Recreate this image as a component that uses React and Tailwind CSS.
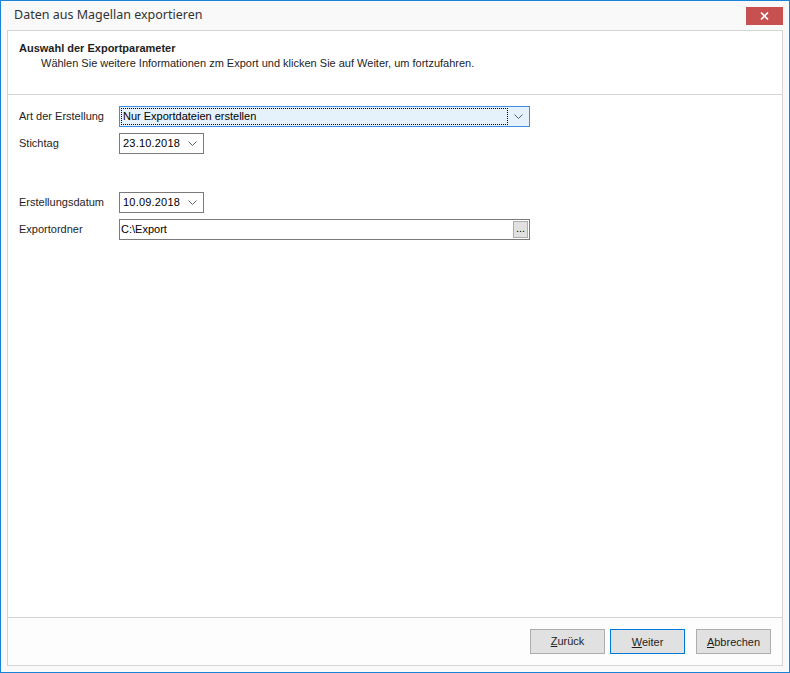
import { useState } from "react";

const uiFont = { fontFamily: '"Liberation Sans", Arial, sans-serif' };

function Chevron() {
  return (
    <svg width="9" height="6" viewBox="0 0 9 6" className="shrink-0">
      <polyline points="0.5,0.5 4.5,4.5 8.5,0.5" fill="none" stroke="#606060" strokeWidth="1" />
    </svg>
  );
}

function DateBox({ value }) {
  return (
    <div className="flex h-[21px] w-[85px] items-center justify-between border border-[#7a7a7a] bg-white pl-[3px] pr-[6px] text-[11px] text-black">
      <span className="tracking-[0.2px]">{value}</span>
      <Chevron />
    </div>
  );
}

function Row({ label, children }) {
  return (
    <div className="flex items-center">
      <div className="w-[100px] text-[11px] text-[#1e1e1e]">{label}</div>
      {children}
    </div>
  );
}

function DialogButton({ children, primary }) {
  return (
    <button
      type="button"
      className={`h-[25px] w-[75px] border bg-[#e1e1e1] text-[11px] text-[#1e1e1e] ${
        primary ? "border-[#0078d7]" : "border-[#adadad]"
      }`}
    >
      {children}
    </button>
  );
}

export default function App() {
  const [art] = useState("Nur Exportdateien erstellen");

  return (
    <div
      className="flex h-[673px] w-[790px] flex-col border border-[#1883d7] bg-[#f9f9f9]"
      style={uiFont}
    >
      {/* Titelleiste */}
      <div className="flex h-[29px] items-start justify-between pl-[13px] pr-[6px]">
        <span
          className="mt-[5px] text-[12.5px] text-[#333333]"
          style={{ fontFamily: '"Noto Sans", "Open Sans", sans-serif' }}
        >
          Daten aus Magellan exportieren
        </span>
        <div className="mt-[6px] flex h-[18px] w-[37px] items-center justify-center bg-[#c75050]">
          <svg width="9" height="8" viewBox="0 0 9 8">
            <path d="M1 0.5 L8 7.5 M8 0.5 L1 7.5" stroke="#ffffff" strokeWidth="1.6" />
          </svg>
        </div>
      </div>

      {/* Inhalt */}
      <div className="mx-[6px] mb-[6px] flex flex-1 flex-col border border-[#d4d4d4] bg-white">
        {/* Kopfbereich */}
        <div className="h-[64px] border-b border-[#d4d4d4] pl-[11px] pt-[10px] leading-[15px]">
          <div className="text-[11px] font-bold text-[#1e1e1e]">Auswahl der Exportparameter</div>
          <div className="pl-[22px] text-[11px] text-[#1e1e1e]">
            Wählen Sie weitere Informationen zm Export und klicken Sie auf Weiter, um fortzufahren.
          </div>
        </div>

        {/* Formular */}
        <div className="flex flex-1 flex-col pl-[11px] pt-[11px]">
          <Row label="Art der Erstellung">
            <div className="flex h-[21px] w-[411px] items-center border border-[#3c8fde] bg-[#e5f1fb] pr-[6px]">
              <div className="ml-[1px] flex h-[17px] flex-1 items-center border border-dotted border-black pl-[1px] text-[11px] text-black">
                {art}
              </div>
              <div className="ml-[6px]">
                <Chevron />
              </div>
            </div>
          </Row>
          <div className="mt-[6px]">
            <Row label="Stichtag">
              <DateBox value="23.10.2018" />
            </Row>
          </div>
          <div className="mt-[38px]">
            <Row label="Erstellungsdatum">
              <DateBox value="10.09.2018" />
            </Row>
          </div>
          <div className="mt-[6px]">
            <Row label="Exportordner">
              <div className="flex h-[21px] w-[411px] items-center justify-between border border-[#7a7a7a] bg-white pl-[1px] pr-[1px] text-[11px] text-black">
                <span>C:\Export</span>
                <div className="flex h-[17px] w-[15px] items-center justify-center border border-[#adadad] bg-[#e1e1e1] pb-[3px] text-[11px] leading-none">
                  ...
                </div>
              </div>
            </Row>
          </div>
        </div>

        {/* Schaltflächen */}
        <div className="flex h-[48px] items-center justify-end border-t border-[#d4d4d4] bg-[#fdfdfd] pr-[11px]">
          <DialogButton>
            <u>Z</u>urück
          </DialogButton>
          <div className="ml-[5px]">
            <DialogButton primary>
              <u>W</u>eiter
            </DialogButton>
          </div>
          <div className="ml-[11px]">
            <DialogButton>
              <u>A</u>bbrechen
            </DialogButton>
          </div>
        </div>
      </div>
    </div>
  );
}
